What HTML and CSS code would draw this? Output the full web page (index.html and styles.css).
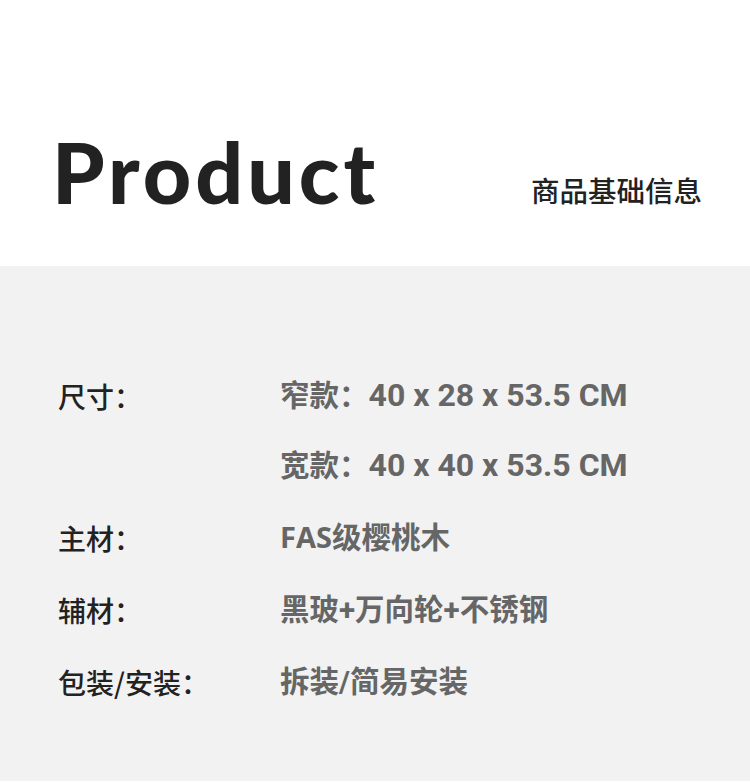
FILE: index.html
```html
<!DOCTYPE html>
<html lang="zh">
<head>
  <meta charset="UTF-8">
  <meta name="viewport" content="width=device-width, initial-scale=1.0">
  <title>Product</title>
  <link rel="stylesheet" href="styles.css">
</head>
<body>
  <header class="head">
    <h1 class="title">Product</h1>
    <span class="subtitle">商品基础信息</span>
  </header>

  <section class="specs">
    <div class="row">
      <span class="label">尺寸：</span>
      <div class="values">
        <span class="value">窄款：<span class="num">40 x 28 x 53.5 CM</span></span>
        <span class="value">宽款：<span class="num">40 x 40 x 53.5 CM</span></span>
      </div>
    </div>
    <div class="row">
      <span class="label">主材：</span>
      <span class="value"><span class="grade">FAS</span>级樱桃木</span>
    </div>
    <div class="row">
      <span class="label">辅材：</span>
      <span class="value">黑玻+万向轮+不锈钢</span>
    </div>
    <div class="row">
      <span class="label">包装/安装：</span>
      <span class="value">拆装/简易安装</span>
    </div>
  </section>
</body>
</html>
```

FILE: styles.css
```css
body {
  margin: 0;
  background: #fff;
  font-family: "Noto Sans CJK SC", "Noto Sans", sans-serif;
  color: #222;
}
.head {
  height: 266px;
  box-sizing: border-box;
  padding: 130px 48px 0 52px;
  display: flex;
  justify-content: space-between;
  align-items: flex-start;
}
.title {
  margin: 0;
  font-family: "Lato", sans-serif;
  font-weight: 900;
  font-size: 84px;
  letter-spacing: 4px;
  line-height: 1;
  color: #222;
}
.subtitle {
  margin-top: 39px;
  font-size: 28.5px;
  font-weight: 500;
  color: #222;
}
.specs {
  background: #f2f2f2;
  height: 515px;
  box-sizing: border-box;
  padding: 109px 0 0 58px;
}
.row {
  display: flex;
  margin-bottom: 30px;
}
.label {
  width: 222px;
  flex: none;
  font-size: 28px;
  font-weight: 500;
  line-height: 42px;
  color: #222;
}
.values {
  display: flex;
  flex-direction: column;
  gap: 28px;
}
.value {
  font-family: "Roboto", "Noto Sans CJK SC", sans-serif;
  font-size: 29.5px;
  line-height: 42px;
  font-weight: 700;
  color: #666;
}
.num {
  font-size: 32px;
  font-weight: 700;
  line-height: 1;
}
.grade {
  font-family: "Open Sans", sans-serif;
  font-size: 29px;
  line-height: 1;
}
```
